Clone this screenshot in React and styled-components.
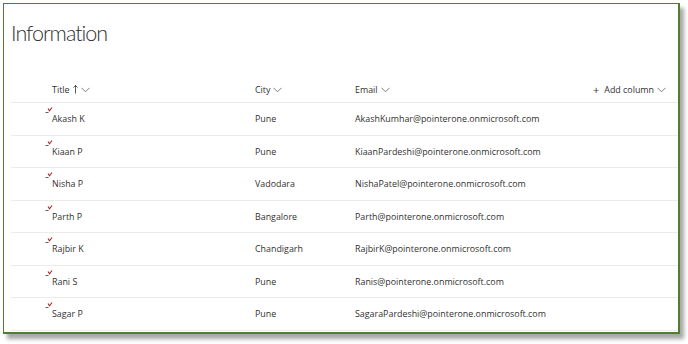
import styled, { createGlobalStyle } from "styled-components"

const GlobalStyle = createGlobalStyle`
    html, body {
        margin: 0;
        padding: 0;
        background: #ffffff;
    }
    body {
        font-family: "Open Sans", "Liberation Sans", sans-serif;
        color: #323130;
    }
`;

const Page = styled.div`
    width: 688px;
    height: 344px;
    padding: 3px 0 0 3px;
    box-sizing: border-box;
    overflow: hidden;
`;

const Frame = styled.div`
    width: 677px;
    height: 331px;
    box-sizing: border-box;
    border: 1px solid #4f7f2e;
    border-right-width: 2px;
    border-bottom-width: 2px;
    box-shadow: 4px 5px 4px rgba(0, 0, 0, 0.35);
    background: #fff;
    padding-left: 7px;
    overflow: hidden;
`;

const Heading = styled.h1`
    margin: 0;
    padding-top: 15px;
    height: 73px;
    box-sizing: border-box;
    font-family: Lato, "Open Sans", sans-serif;
    font-weight: 300;
    font-size: 21.5px;
    line-height: 28px;
    letter-spacing: -1px;
    color: #323130;
`;

const Row = styled.div`
    display: flex;
    align-items: center;
    height: ${props => props.header ? "26px" : "32.5px"};
    padding-left: 41px;
    border-bottom: 1px solid #edebe9;
    box-sizing: border-box;
    font-size: 8.9px;
`;

const Cell = styled.div`
    width: ${props => props.w}px;
    flex: none;
    display: flex;
    align-items: center;
    gap: 3px;
    position: relative;
    white-space: nowrap;
`;

const Chevron = () => (
    <svg width="9" height="6" viewBox="0 0 9 6">
        <path d="M0.5 0.8 L4.5 4.8 L8.5 0.8" fill="none" stroke="#605e5c" strokeWidth="0.8" />
    </svg>
);

const UpArrow = () => (
    <svg width="5" height="9" viewBox="0 0 5 9">
        <path d="M2.5 0.5 V8.5 M0.5 2.5 L2.5 0.5 L4.5 2.5" fill="none" stroke="#323130" strokeWidth="0.8" />
    </svg>
);

const NewMark = styled.svg`
    position: absolute;
    left: -7px;
    top: -5px;
`;

const NewIcon = () => (
    <NewMark width="8" height="7" viewBox="0 0 8 7">
        <path d="M0.5 5.5 H3.5" stroke="#605e5c" strokeWidth="1" />
        <path d="M3 1.5 L4.5 3.8 L7 0.5" fill="none" stroke="#a4262c" strokeWidth="1.1" />
    </NewMark>
);

const AddColumn = styled.div`
    display: flex;
    align-items: center;
    gap: 3px;
    white-space: nowrap;
`;

const Plus = styled.span`
    font-size: 11px;
    line-height: 1;
    margin-right: 2px;
`;

const people = [
    ["Akash K", "Pune", "AkashKumhar@pointerone.onmicrosoft.com"],
    ["Kiaan P", "Pune", "KiaanPardeshi@pointerone.onmicrosoft.com"],
    ["Nisha P", "Vadodara", "NishaPatel@pointerone.onmicrosoft.com"],
    ["Parth P", "Bangalore", "Parth@pointerone.onmicrosoft.com"],
    ["Rajbir K", "Chandigarh", "RajbirK@pointerone.onmicrosoft.com"],
    ["Rani S", "Pune", "Ranis@pointerone.onmicrosoft.com"],
    ["Sagar P", "Pune", "SagaraPardeshi@pointerone.onmicrosoft.com"],
];

const App = () => {
  return (
    <Page>
        <GlobalStyle />
        <Frame>
            <Heading>Information</Heading>
            <Row header>
                <Cell w={203}>Title <UpArrow /> <Chevron /></Cell>
                <Cell w={100}>City <Chevron /></Cell>
                <Cell w={238}>Email <Chevron /></Cell>
                <AddColumn><Plus>+</Plus>Add column<Chevron /></AddColumn>
            </Row>
            {people.map(([name, city, email]) => (
                <Row key={name}>
                    <Cell w={203}><NewIcon />{name}</Cell>
                    <Cell w={100}>{city}</Cell>
                    <Cell w={238}>{email}</Cell>
                </Row>
            ))}
        </Frame>
    </Page>
  )
}

export default App
